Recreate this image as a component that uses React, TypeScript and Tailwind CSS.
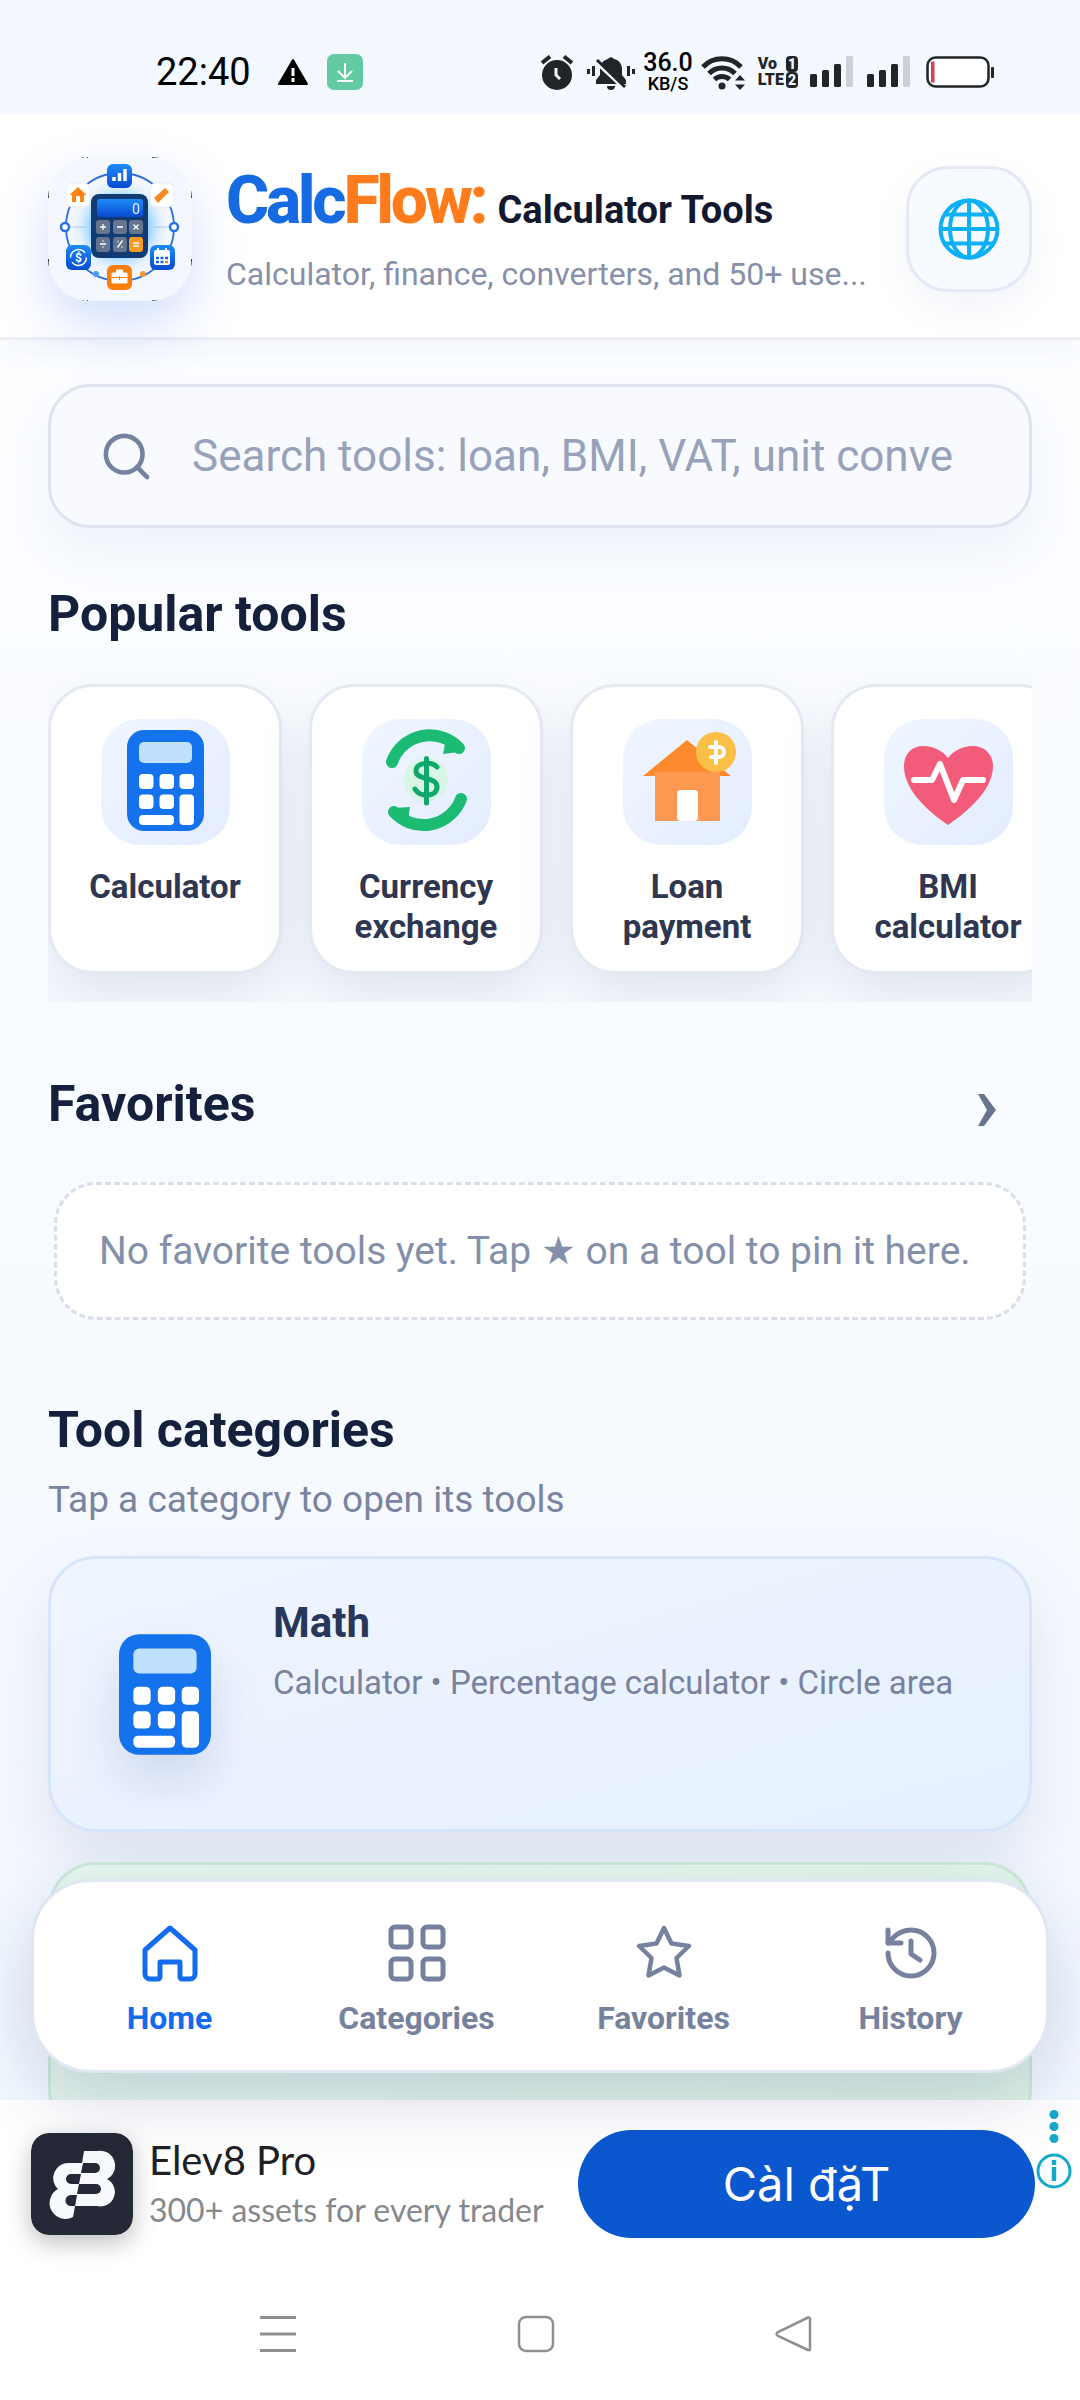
import { useState } from "react";
import { Search } from "lucide-react";

type IconProps = { className?: string };

type Tool = { id: string; label: string; Icon: React.ComponentType<IconProps> };

type Tab = "home" | "categories" | "favorites" | "history";

const TABS: { id: Tab; label: string; Icon: React.ComponentType<IconProps> }[] = [
  { id: "home", label: "Home", Icon: HomeIcon },
  { id: "categories", label: "Categories", Icon: GridIcon },
  { id: "favorites", label: "Favorites", Icon: StarIcon },
  { id: "history", label: "History", Icon: HistoryIcon },
];

const TOOLS: Tool[] = [
  { id: "calculator", label: "Calculator", Icon: CalculatorTile },
  { id: "currency", label: "Currency exchange", Icon: CurrencyTile },
  { id: "loan", label: "Loan payment", Icon: LoanTile },
  { id: "bmi", label: "BMI calculator", Icon: BmiTile },
];

/* ---------- tab bar icons ---------- */

function HomeIcon({ className }: IconProps) {
  return (
    <svg viewBox="0 0 58 58" className={className} fill="none" stroke="currentColor" strokeWidth="5" strokeLinejoin="round" aria-hidden="true">
      <path d="M29 4L54 26V50A5 5 0 0 1 49 55H41A2 2 0 0 1 39 53V38H19V53A2 2 0 0 1 17 55H9A5 5 0 0 1 4 50V26z" />
    </svg>
  );
}

function GridIcon({ className }: IconProps) {
  return (
    <svg viewBox="0 0 58 58" className={className} fill="none" stroke="currentColor" strokeWidth="5" aria-hidden="true">
      <rect x="3" y="3" width="20" height="20" rx="4" />
      <rect x="35" y="3" width="20" height="20" rx="4" />
      <rect x="3" y="35" width="20" height="20" rx="4" />
      <rect x="35" y="35" width="20" height="20" rx="4" />
    </svg>
  );
}

function StarIcon({ className }: IconProps) {
  return (
    <svg viewBox="0 0 58 58" className={className} fill="none" stroke="currentColor" strokeWidth="4.500" strokeLinejoin="round" aria-hidden="true">
      <path d="M29 4L36.500 19.500L54 22L41.500 34L44.500 51.500L29 43.500L13.500 51.500L16.500 34L4 22L21.500 19.500z" />
    </svg>
  );
}

function HistoryIcon({ className }: IconProps) {
  return (
    <svg viewBox="0 0 58 58" className={className} fill="none" stroke="currentColor" strokeWidth="5" strokeLinecap="round" strokeLinejoin="round" aria-hidden="true">
      <path d="M6 29A23 23 0 1 0 29 6A25 25 0 0 0 12 13L6 19" />
      <path d="M6 6V19H19M29 17V30L38 36" />
    </svg>
  );
}

/* ---------- tool icons ---------- */

function CalculatorIcon({ className }: IconProps) {
  return (
    <svg viewBox="0 0 77 101" className={className} aria-hidden="true">
      <rect width="77" height="101" rx="17" fill="#1473ec" />
      <rect x="12" y="12" width="53" height="21" rx="5" fill="#bfe0ff" />
      <g fill="#fff">
        <rect x="12" y="44" width="14.500" height="15" rx="4" />
        <rect x="32.500" y="44" width="14.500" height="15" rx="4" />
        <rect x="52.500" y="44" width="14.500" height="15" rx="4" />
        <rect x="12" y="64.500" width="14.500" height="14.500" rx="4" />
        <rect x="32.500" y="64.500" width="14.500" height="14.500" rx="4" />
        <rect x="12" y="85" width="35" height="10" rx="4" />
        <rect x="52.500" y="64.500" width="14.500" height="30.500" rx="4" />
      </g>
    </svg>
  );
}

function CalculatorTile() {
  return <CalculatorIcon className="mb-1 h-[101px] w-[77px]" />;
}

function CurrencyTile({ className }: IconProps) {
  return (
    <svg viewBox="0 0 129 126" className={className} aria-hidden="true">
      <circle cx="64" cy="61" r="22" fill="#d8f5e6" />
      <g fill="none" stroke="#1bbb74" strokeWidth="12" strokeLinecap="round">
        <path d="M30 43A40 40 0 0 1 97 29" />
        <path d="M99 80A40 40 0 0 1 32 93" />
      </g>
      <path d="M83 25L81 35L97 33z M46 101L48 88L31 89z" fill="#1bbb74" />
      <g fill="none" stroke="#0ea968" strokeWidth="5" strokeLinecap="round">
        <path d="M64.500 39.500V84" />
        <path d="M75 48C70 42 54 43 54 52C54 62 75 57 75 68C75 78 58 79 53 70" />
      </g>
    </svg>
  );
}

function LoanTile({ className }: IconProps) {
  return (
    <svg viewBox="0 0 129 126" className={className} aria-hidden="true">
      <path d="M64 21L108 57H20z" fill="#ff8a2e" />
      <rect x="32" y="53" width="65" height="49" fill="#ff9850" />
      <rect x="54" y="71" width="21" height="31" rx="4" fill="#fff" />
      <circle cx="93" cy="33" r="20" fill="#fcbf45" />
      <path d="M93 23V44M87 28H96A5 5 0 0 1 96 38H88" fill="none" stroke="#fff" strokeWidth="4" strokeLinecap="round" />
    </svg>
  );
}

function BmiTile({ className }: IconProps) {
  return (
    <svg viewBox="0 0 129 126" className={className} aria-hidden="true">
      <path
        d="M64 106C38 88 20 68 20 47C20 34 29 27 39 27C50 27 59 32 64 39C69 32 78 27 89 27C99 27 109 34 109 47C109 68 90 88 64 106z"
        fill="#f25c7a"
      />
      <path
        d="M30 61H48L56 45L70 81L79 61H99"
        fill="none"
        stroke="#fff"
        strokeWidth="6"
        strokeLinecap="round"
        strokeLinejoin="round"
      />
    </svg>
  );
}

/* ---------- brand ---------- */

function AppLogo({ className }: IconProps) {
  return (
    <svg viewBox="0 0 144 144" className={className} aria-hidden="true">
      <defs>
        <linearGradient id="logo-blue" x1="0" y1="0" x2="0" y2="1">
          <stop offset="0" stopColor="#1d8bfa" />
          <stop offset="1" stopColor="#0a49cf" />
        </linearGradient>
        <radialGradient id="logo-glow">
          <stop offset="0.600" stopColor="#9fd6ff" />
          <stop offset="1" stopColor="#eef5ff" stopOpacity="0" />
        </radialGradient>
      </defs>
      <rect width="144" height="144" rx="42" fill="#f4f7fe" />
      <path
        d="M29 .5h11M104 .5h12M29 143.500h11M104 143.500h12M.5 24v18M143.500 24v18M.5 102v16M143.500 102v16"
        stroke="#1f2430"
        strokeWidth="1"
        strokeDasharray="7 3"
      />
      <circle cx="72" cy="70" r="50" fill="url(#logo-glow)" />
      <circle cx="72" cy="70" r="54" fill="none" stroke="#2b6fd8" strokeWidth="1.800" />
      <path d="M21 70h18M105 70h17" stroke="#a9c9f2" />
      <g fill="#fff" stroke="#2173e6" strokeWidth="2.500">
        <circle cx="17" cy="70" r="4" />
        <circle cx="126" cy="70" r="4" />
      </g>
      <circle cx="48" cy="117" r="3" fill="#4aa0f5" />
      <circle cx="95" cy="117" r="3" fill="#fb9a2c" />

      <rect x="43" y="37" width="57" height="64" rx="8" fill="#123a73" />
      <rect x="49" y="42" width="46" height="18" rx="3" fill="url(#logo-blue)" />
      <text x="84" y="57" fontSize="14" fill="#dff2ff" fontFamily="Roboto, sans-serif">0</text>
      <g fill="#66758f">
        <rect x="48" y="63" width="14" height="14" rx="3" />
        <rect x="65" y="63" width="14" height="14" rx="3" />
        <rect x="81" y="63" width="14" height="14" rx="3" />
        <rect x="48" y="80" width="14" height="15" rx="3" />
        <rect x="65" y="80" width="14" height="15" rx="3" />
      </g>
      <rect x="81" y="80" width="14" height="15" rx="3" fill="#fb9a1c" />
      <path
        d="M52 70h6M55 67v6M69 70h6M85.500 67.500l5 5M90.500 67.500l-5 5M52 87h6M69.500 90.500l5-7M85 86h6M85 89h6"
        stroke="#fff"
        strokeWidth="1.300"
      />
      <path d="M54.500 84h1M54.500 90h1M69.500 84.500h1M73.500 90h1" stroke="#fff" strokeWidth="1.400" />

      <rect x="59" y="7" width="25" height="24" rx="6" fill="url(#logo-blue)" />
      <path d="M66 24v-4M71.500 24v-8M77 24V12" stroke="#fff" strokeWidth="3.500" />
      <g fill="#fff" stroke="#e3eaf6">
        <rect x="18" y="26" width="24" height="24" rx="6" />
        <rect x="102" y="26" width="24" height="24" rx="6" />
      </g>
      <path d="M30 30L21.500 38H24V45H28V39H32V45H36V38H38.500z" fill="#fb8412" />
      <path d="M106 41L117 31L121 35L110 46z" fill="#f58a25" />
      <rect x="18" y="88" width="25" height="25" rx="6" fill="url(#logo-blue)" />
      <circle cx="30.500" cy="100.500" r="8" fill="none" stroke="#fff" strokeWidth="1.500" strokeDasharray="20 5" />
      <text x="27" y="105" fontSize="12" fontWeight="700" fill="#fff" fontFamily="Roboto, sans-serif">$</text>
      <rect x="102" y="88" width="25" height="25" rx="6" fill="url(#logo-blue)" />
      <rect x="106" y="93" width="16" height="15" rx="2" fill="#fff" />
      <path d="M106 97.500h16M110 91v4M118 91v4" stroke="#fff" strokeWidth="2" />
      <path d="M108 101h12M108 105h8" stroke="#1a62de" strokeWidth="2.500" strokeDasharray="3 1.500" />
      <path d="M117 105h3" stroke="#fb8412" strokeWidth="2.500" />
      <rect x="59" y="108" width="25" height="25" rx="6" fill="#fb7d0b" />
      <path d="M64 116h15v10h-15zM68.500 116v-3h6v3" fill="#fff" stroke="#fff" strokeLinejoin="round" />
      <path d="M64 120.500h15M71.500 119v4" stroke="#fb7d0b" />
    </svg>
  );
}

function GlobeIcon({ className }: IconProps) {
  return (
    <svg viewBox="0 0 62 62" className={className} fill="none" stroke="#0cb0f6" strokeWidth="4" aria-hidden="true">
      <circle cx="31" cy="31" r="28.500" />
      <ellipse cx="31" cy="31" rx="19" ry="28.500" />
      <path d="M31 2v58M2 31h58M7 16.500h48M7 45.500h48" />
    </svg>
  );
}

function AdLogo({ className }: IconProps) {
  return (
    <svg viewBox="0 0 102 102" className={className} aria-hidden="true">
      <rect width="102" height="102" rx="18" fill="#252836" />
      <g fill="#f7f9fc">
        <path d="M53 18H66A15 15 0 0 1 76 46A14.500 14.500 0 0 1 66 73H44z" />
        <path d="M52 30H38A15 15 0 0 0 27 56A15 15 0 0 0 42 84z" />
      </g>
      <g fill="#252836">
        <path d="M52 30H64A5 5 0 0 1 64 40H50z" />
        <path d="M50 41H40A4.500 4.500 0 0 0 40 51H48z" />
        <path d="M48 51H65A5 5 0 0 1 65 61H46z" />
        <path d="M46 62H40A5 5 0 0 0 40 73H44z" />
      </g>
    </svg>
  );
}

/* ---------- status bar ---------- */

function SignalBars() {
  return (
    <svg viewBox="0 0 43 32" className="h-8 w-[43px]" fill="#212528" aria-hidden="true">
      <rect x="0" y="18" width="7" height="13" rx="1.500" />
      <rect x="12" y="14" width="7" height="17" rx="1.500" />
      <rect x="24" y="8" width="7" height="23" rx="1.500" />
      <rect x="36" y="0" width="7" height="31" rx="1.500" fill="#cdd0d5" />
    </svg>
  );
}

function StatusBar() {
  return (
    <div className="flex h-[114px] shrink-0 items-center justify-between bg-[#f4f8ff] pt-[30px] pr-[86px] pl-[156px] text-black">
      <div className="flex items-center">
        <span className="text-[38px] leading-10">22:40</span>
        <svg viewBox="0 0 32 28" className="ml-[26px] h-7 w-8" aria-hidden="true">
          <path d="M16 2L30 26H2z" stroke="#000" strokeWidth="2" strokeLinejoin="round" />
          <path d="M16 10v8M16 20v4" stroke="#f4f8ff" strokeWidth="3" />
        </svg>
        <svg viewBox="0 0 36 36" className="ml-[18px] size-9" fill="none" aria-hidden="true">
          <rect width="36" height="36" rx="7" fill="#62cba4" />
          <path d="M18 9v14M11 17l7 7l7-7M10 27h16" stroke="#fff" strokeWidth="2" />
        </svg>
      </div>

      <div className="flex items-center">
        <svg viewBox="0 0 32 35" className="h-[35px] w-8" aria-hidden="true">
          <circle cx="16" cy="20" r="15" fill="#212528" />
          <path d="M1 8l8-6.500M31 8l-8-6.500" stroke="#212528" strokeWidth="4" />
          <path d="M15 13v7l4 4" fill="none" stroke="#f4f8ff" strokeWidth="3" />
        </svg>
        <svg viewBox="0 0 48 35" className="ml-[14px] h-[35px] w-12" aria-hidden="true">
          <path d="M9 29v-4l4-5v-6c0-6 4-9 8-10a3.500 3.500 0 0 1 6 0c5 1 8 5 8 10v6l4 5v4z" fill="#212528" />
          <path d="M20 31h8a4 4 0 0 1-8 0z" fill="#212528" />
          <path d="M7 5l30 28" stroke="#f4f8ff" strokeWidth="4" />
          <path d="M10 5l28 27M1.500 14v5M6.500 11v10M41.500 11v10M46.500 14v5" stroke="#212528" strokeWidth="3" />
        </svg>
        <span className="ml-2 flex flex-col items-center font-medium">
          <span className="text-[25px] leading-6">36.0</span>
          <span className="text-[18px] leading-[18px]">KB/S</span>
        </span>
        <svg viewBox="0 0 45 35" className="ml-2 h-[35px] w-[45px]" aria-hidden="true">
          <g fill="none" stroke="#212528" strokeWidth="5">
            <path d="M2 12a26 26 0 0 1 38 0" />
            <path d="M8 18.500a18 18 0 0 1 26 0" />
            <path d="M13.500 24.500a11 11 0 0 1 15 0" />
          </g>
          <circle cx="21" cy="31" r="3.500" fill="#212528" />
          <path d="M39 20l5 5.500H34zM39 35l5-5.500H34z" fill="#212528" />
        </svg>
        <span className="ml-3 grid grid-cols-[auto_auto] items-center gap-x-0.5 text-[16px] leading-4 font-black text-[#212528]">
          <span>Vo</span>
          <span className="rounded-sm bg-[#212528] px-0.5 text-center text-[14px] leading-4 text-[#f4f8ff]">1</span>
          <span>LTE</span>
          <span className="rounded-sm bg-[#212528] px-0.5 text-center text-[14px] leading-4 text-[#f4f8ff]">2</span>
        </span>
        <span className="ml-3 flex gap-[14px]">
          <SignalBars />
          <SignalBars />
        </span>
        <svg viewBox="0 0 68 32" className="ml-4 h-8 w-[68px]" aria-hidden="true">
          <rect x="1.500" y="1.500" width="61" height="29" rx="8" fill="#fff" stroke="#212528" strokeWidth="2.500" />
          <rect x="5" y="5.500" width="3.500" height="21" fill="#d9405a" />
          <rect x="65" y="11" width="3" height="11" rx="1" fill="#212528" />
        </svg>
      </div>
    </div>
  );
}

/* ---------- sections ---------- */

function AppHeader() {
  return (
    <header className="flex items-center border-b-[3px] border-[#eceef4] bg-white px-12 pt-[43px] pb-9 shadow-[0_6px_30px_rgba(80,110,180,0.06)]">
      <AppLogo className="size-36 shrink-0 rounded-[42px] shadow-[0_24px_54px_rgba(50,110,240,0.22)]" />
      <div className="ml-[34px] flex min-w-0 flex-1 flex-col">
        <h1 className="flex items-baseline gap-3 leading-[72px] font-bold text-[#12182e]">
          <span className="text-[66px] font-extrabold tracking-tighter text-[#176be2]">
            Calc<span className="text-[#ff7b1c]">Flow:</span>
          </span>
          <span className="text-[38px]">Calculator Tools</span>
        </h1>
        <p className="mt-2 text-[32px] leading-10 whitespace-nowrap text-[#8790a8]">
          Calculator, finance, converters, and 50+ use...
        </p>
      </div>
      <button
        aria-label="Change language"
        className="flex size-[126px] shrink-0 items-center justify-center rounded-[42px] border-[3px] border-[#e6e8f6] bg-[#f7faff] shadow-[0_15px_36px_rgba(80,110,180,0.08)]"
      >
        <GlobeIcon className="size-[62px]" />
      </button>
    </header>
  );
}

function SearchBox() {
  return (
    <label className="flex h-36 items-center rounded-[42px] border-[3px] border-[#dfe3ee] bg-[#f8faff] pr-10 pl-12 shadow-[0_24px_48px_rgba(90,100,180,0.07)]">
      <Search className="size-[55px] shrink-0 text-[#74829d]" strokeWidth={2} />
      <input
        type="search"
        aria-label="Search tools"
        placeholder="Search tools: loan, BMI, VAT, unit conve"
        className="ml-[38px] min-w-0 flex-1 bg-transparent text-[44px] leading-[52px] text-[#27324f] outline-none placeholder:text-[#97a2b9]"
      />
    </label>
  );
}

function PopularTools() {
  return (
    <section>
      <h2 className="mt-14 text-[50px] leading-[60px] font-bold text-[#14203c]">Popular tools</h2>
      <div className="mt-7 flex gap-[27px] overflow-x-auto pt-3 pb-7 [scrollbar-width:none]">
        {TOOLS.map(({ id, label, Icon }) => (
          <button
            key={id}
            className="flex h-[290px] w-[234px] shrink-0 flex-col items-center rounded-[45px] border-[3px] border-[#e5e9f1] bg-white px-5 pt-8 shadow-[0_24px_54px_rgba(60,80,130,0.13)]"
          >
            <span className="flex h-[126px] w-[129px] shrink-0 items-center justify-center rounded-[38px] bg-linear-to-br from-[#eff6ff] to-[#e4edff]">
              <Icon className="h-[126px] w-[129px]" />
            </span>
            <span className="mt-[22px] text-[33px] leading-10 font-bold text-[#2e3650]">{label}</span>
          </button>
        ))}
      </div>
    </section>
  );
}

function Favorites() {
  return (
    <section className="mt-18">
      <div className="flex items-center justify-between pr-[35px]">
        <h2 className="text-[50px] leading-[60px] font-bold text-[#14203c]">Favorites</h2>
        <button aria-label="Open favorites" className="mt-3">
          <svg viewBox="0 0 20 32" className="h-8 w-5" aria-hidden="true">
            <path d="M1 0h6l12 16l-12 16h-6l9-16z" fill="#66748f" />
          </svg>
        </button>
      </div>
      <p className="mx-1.5 mt-12 rounded-[42px] border-[3px] border-dashed border-[#dadee9] bg-white py-[41px] pl-[42px] text-[39px] leading-[50px] whitespace-nowrap text-[#8490a9]">
        No favorite tools yet. Tap ★ on a tool to pin it here.
      </p>
    </section>
  );
}

function Categories() {
  return (
    <section className="mt-20">
      <h2 className="text-[50px] leading-[60px] font-bold text-[#14203c]">Tool categories</h2>
      <p className="mt-4 text-[37px] leading-12 text-[#79849f]">Tap a category to open its tools</p>
      <div className="mt-8 flex flex-col gap-[30px]">
        <a
          href="#math"
          className="flex h-[276px] rounded-[48px] border-[3px] border-[#d6e5fb] bg-linear-to-br from-[#eff6ff] via-[#ebf2ff] to-[#e5f0ff] pl-[68px] shadow-[0_30px_66px_rgba(60,80,130,0.13)]"
        >
          <CalculatorIcon className="h-[121px] w-[92px] shrink-0 self-center drop-shadow-[0_24px_24px_rgba(60,90,150,0.16)]" />
          <span className="ml-[62px] flex flex-col pt-10">
            <span className="text-[42px] leading-12 font-bold text-[#27375a]">Math</span>
            <span className="mt-4 text-[33px] leading-10 text-[#77829c]">
              Calculator • Percentage calculator • Circle area
            </span>
          </span>
        </a>
        <a
          href="#finance"
          aria-label="Finance"
          className="h-[276px] rounded-[48px] border-[3px] border-[#cdeada] bg-linear-to-br from-[#e8f8f0] to-[#def3e5]"
        />
      </div>
    </section>
  );
}

function TabBar() {
  const [activeTab, setActiveTab] = useState<Tab>("home");

  return (
    <nav className="absolute inset-x-[31px] bottom-[27px] flex h-[194px] rounded-[60px] border-[3px] border-[#e1e6f3] bg-white px-3 shadow-[0_24px_72px_rgba(40,60,120,0.20)]">
      {TABS.map(({ id, label, Icon }) => (
        <button
          key={id}
          onClick={() => setActiveTab(id)}
          className={
            activeTab === id
              ? "flex flex-1 flex-col items-center pt-[42px] text-[#136bee]"
              : "flex flex-1 flex-col items-center pt-[42px] text-[#76829d]"
          }
        >
          <Icon className="size-[58px]" />
          <span className="mt-4 text-[32px] leading-10 font-bold">{label}</span>
        </button>
      ))}
    </nav>
  );
}

function AdBanner() {
  return (
    <aside className="flex h-[168px] shrink-0 items-start bg-white pt-[30px] pl-[31px]">
      <AdLogo className="mt-[3px] size-[102px] shrink-0 rounded-[18px] shadow-[0_8px_24px_rgba(0,0,0,0.25)]" />
      <div className="ml-4 flex min-w-0 flex-1 flex-col pt-1.5 font-[Lato,sans-serif] whitespace-nowrap">
        <span className="text-[40px] leading-12 text-[#202124]">Elev8 Pro</span>
        <span className="mt-1.5 text-[32px] leading-10 text-[#85888c]">300+ assets for every trader</span>
      </div>
      <button className="h-[108px] w-[457px] shrink-0 rounded-full bg-[#0b57d0] font-[Inter,sans-serif] text-[47px] text-white">
        Càl đặT
      </button>
      <button aria-label="Ad choices" className="-mt-5 w-[45px] shrink-0">
        <svg viewBox="0 0 45 82" className="h-[82px] w-[45px]" aria-hidden="true">
          <g fill="#12aac8">
            <circle cx="19" cy="4.500" r="4.500" />
            <circle cx="19" cy="16.500" r="4.500" />
            <circle cx="19" cy="28.500" r="4.500" />
          </g>
          <circle cx="19" cy="61" r="16" fill="#fff" stroke="#12aac8" strokeWidth="3" />
          <path d="M19 50v5M19 57v14" stroke="#12aac8" strokeWidth="4.500" />
        </svg>
      </button>
    </aside>
  );
}

function SystemNav() {
  return (
    <div className="flex h-[132px] shrink-0 items-start justify-between bg-white pt-[47px] pr-[268px] pl-[259px]">
      <button aria-label="Recent apps">
        <svg viewBox="0 0 38 38" className="size-[38px]" aria-hidden="true">
          <path d="M1 2.500h36M1 19h36M1 35.500h36" stroke="#8f8f8f" strokeWidth="3" />
        </svg>
      </button>
      <button aria-label="Home screen">
        <svg viewBox="0 0 38 38" className="size-[38px]" fill="none" aria-hidden="true">
          <rect x="2" y="2" width="34" height="34" rx="7" stroke="#8f8f8f" strokeWidth="2.500" />
        </svg>
      </button>
      <button aria-label="Back">
        <svg viewBox="0 0 38 38" className="size-[38px]" fill="none" aria-hidden="true">
          <path d="M34 2.500Q36 2 36 4V34Q36 36 34 35L4 21Q1 19 4 17z" stroke="#8f8f8f" strokeWidth="2.500" />
        </svg>
      </button>
    </div>
  );
}

export default function App() {
  return (
    <div className="flex h-screen flex-col font-[Roboto,sans-serif]">
      <StatusBar />
      <div className="relative flex min-h-0 flex-1 flex-col bg-linear-to-b from-[#fdfeff] to-[#f3f8ff]">
        <div className="min-h-0 flex-1 overflow-y-auto [scrollbar-width:none]">
          <AppHeader />
          <main className="px-12 pt-11">
            <SearchBox />
            <PopularTools />
            <Favorites />
            <Categories />
          </main>
        </div>
        <TabBar />
      </div>
      <AdBanner />
      <SystemNav />
    </div>
  );
}
